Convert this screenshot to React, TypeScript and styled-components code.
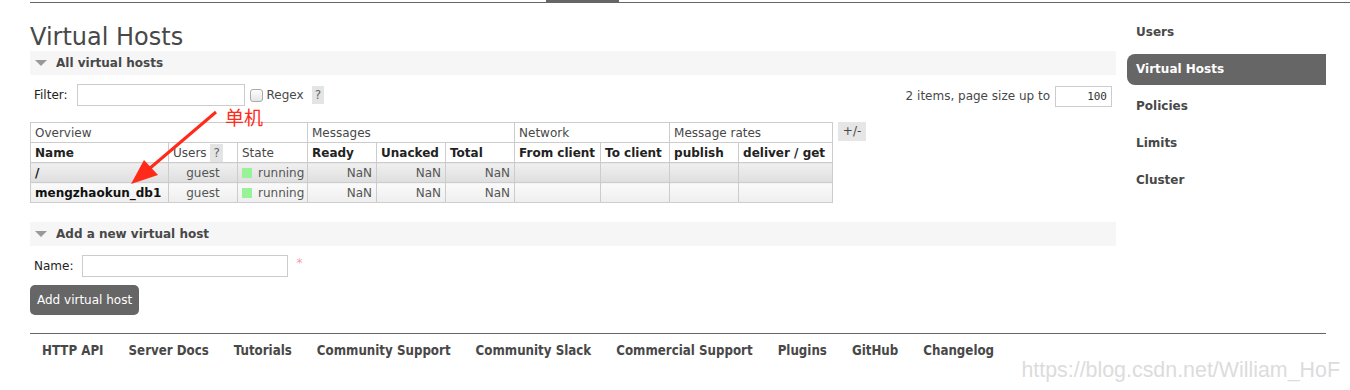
import * as React from 'react';
import styled, { createGlobalStyle } from 'styled-components';

const GlobalStyle = createGlobalStyle`
  html, body {
    margin: 0;
    padding: 0;
    background: #ffffff;
  }
  body {
    font-family: 'DejaVu Sans', Verdana, sans-serif;
    font-size: 12px;
    color: #484848;
  }
`;

type Host = { name: string; users: string; state: string };

const hosts: Host[] = [
  { name: '/', users: 'guest', state: 'running' },
  { name: 'mengzhaokun_db1', users: 'guest', state: 'running' },
];

const colWidths = [138, 69, 70, 69, 69, 69, 86, 69, 69, 94];

const navItems = ['Users', 'Virtual Hosts', 'Policies', 'Limits', 'Cluster'];
const footerLinks = [
  'HTTP API',
  'Server Docs',
  'Tutorials',
  'Community Support',
  'Community Slack',
  'Commercial Support',
  'Plugins',
  'GitHub',
  'Changelog',
];

const App = () => {
  return (
    <Page>
      <GlobalStyle />
      <TopBar>
        <TopTab />
      </TopBar>
      <Layout>
        <Main>
          <Title>Virtual Hosts</Title>
          <SectionHeader>
            <Triangle />
            <span>All virtual hosts</span>
          </SectionHeader>
          <FilterRow>
            <FilterLeft>
              <label>Filter:</label>
              <TextInput $width={168} />
              <CheckBox />
              <span>Regex</span>
              <Help>?</Help>
            </FilterLeft>
            <FilterRight>
              <span>2 items, page size up to</span>
              <PageSize>100</PageSize>
            </FilterRight>
          </FilterRow>

          <TableWrap>
            <ListTable>
              <colgroup>
                {colWidths.map((w, i) => (
                  <Col key={i} $w={w} />
                ))}
              </colgroup>
              <thead>
                <tr>
                  <GroupTh colSpan={3}>Overview</GroupTh>
                  <GroupTh colSpan={3}>Messages</GroupTh>
                  <GroupTh colSpan={2}>Network</GroupTh>
                  <GroupTh colSpan={2}>Message rates</GroupTh>
                </tr>
                <tr>
                  <Th>Name</Th>
                  <Th $plain>
                    Users <Help>?</Help>
                  </Th>
                  <Th $plain>State</Th>
                  <Th>Ready</Th>
                  <Th>Unacked</Th>
                  <Th>Total</Th>
                  <Th>From client</Th>
                  <Th>To client</Th>
                  <Th>publish</Th>
                  <Th>deliver / get</Th>
                </tr>
              </thead>
              <tbody>
                {hosts.map((h, i) => (
                  <Row key={h.name} $alt={i % 2 === 0}>
                    <NameTd>{h.name}</NameTd>
                    <Td $align="center">{h.users}</Td>
                    <Td>
                      <StateBox />
                      {h.state}
                    </Td>
                    <Td $align="right">NaN</Td>
                    <Td $align="right">NaN</Td>
                    <Td $align="right">NaN</Td>
                    <Td />
                    <Td />
                    <Td />
                    <Td />
                  </Row>
                ))}
              </tbody>
            </ListTable>
            <Toggle>+/-</Toggle>
          </TableWrap>

          <SectionHeader>
            <Triangle />
            <span>Add a new virtual host</span>
          </SectionHeader>
          <NameRow>
            <label>Name:</label>
            <TextInput $width={206} />
            <Required>*</Required>
          </NameRow>
          <AddButton>Add virtual host</AddButton>
        </Main>
        <Nav>
          {navItems.map((item) => (
            <NavItem key={item} $active={item === 'Virtual Hosts'}>
              {item}
            </NavItem>
          ))}
        </Nav>
      </Layout>
      <Footer>
        {footerLinks.map((l) => (
          <FooterLink key={l}>{l}</FooterLink>
        ))}
      </Footer>

      <Arrow width="110" height="90" viewBox="0 0 110 90">
        <line x1="92" y1="4" x2="25" y2="61" stroke="#ff2a1a" strokeWidth="3" />
        <polygon points="7,76 20,52 34,67" fill="#ff2a1a" />
      </Arrow>
      <Note>单机</Note>
      <Watermark>https://blog.csdn.net/William_HoF</Watermark>
    </Page>
  );
};

const Page = styled.div`
  position: relative;
  width: 1350px;
  height: 390px;
  overflow: hidden;
`;

const TopBar = styled.div`
  margin-left: 30px;
  width: 1296px;
  height: 2px;
  border-bottom: 1px solid #666;
  padding-left: 516px;
  box-sizing: content-box;
`;

const TopTab = styled.div`
  width: 73px;
  height: 3px;
  background: #666;
`;

const Layout = styled.div`
  display: flex;
  padding-left: 30px;
`;

const Main = styled.div`
  width: 1086px;
`;

const Title = styled.h1`
  margin: 20px 0 0;
  font-size: 24px;
  font-weight: normal;
  line-height: 28px;
  color: #484848;
`;

const SectionHeader = styled.div`
  display: flex;
  align-items: center;
  height: 24px;
  background: #f6f6f6;
  padding-left: 5px;
  font-weight: bold;
  font-size: 12px;
  color: #484848;
  & > span {
    margin-left: 9px;
  }
`;

const Triangle = styled.div`
  width: 0;
  height: 0;
  border-left: 6px solid transparent;
  border-right: 6px solid transparent;
  border-top: 6px solid #999;
`;

const FilterRow = styled.div`
  display: flex;
  justify-content: space-between;
  align-items: center;
  margin-top: 9px;
  height: 22px;
  padding-left: 4px;
`;

const FilterLeft = styled.div`
  display: flex;
  align-items: center;
  color: #484848;
  & > label {
    margin-right: 9px;
    color: #222;
  }
  & > span {
    margin: 0 4px 0 4px;
  }
`;

const FilterRight = styled.div`
  display: flex;
  align-items: center;
  margin-top: 2px;
  margin-right: 4px;
  & > span {
    margin-right: 5px;
  }
`;

const TextInput = styled.div<{ $width: number }>`
  width: ${(p) => p.$width}px;
  height: 22px;
  box-sizing: border-box;
  border: 1px solid #ccc;
  background: #fff;
`;

const CheckBox = styled.div`
  width: 11px;
  height: 11px;
  margin-left: 5px;
  border: 1px solid #aaa;
  border-radius: 3px;
  background: linear-gradient(#fdfdfd, #e6e6e6);
`;

const Help = styled.span`
  display: inline-block;
  padding: 0 3px;
  line-height: 18px;
  background: #e4e4e4;
  color: #666;
  font-weight: normal;
`;

const PageSize = styled.div`
  width: 57px;
  height: 21px;
  box-sizing: border-box;
  border: 1px solid #ccc;
  text-align: right;
  padding-right: 4px;
  line-height: 19px;
  font-family: 'DejaVu Sans Mono', monospace;
  font-size: 11px;
  color: #333;
`;

const TableWrap = styled.div`
  display: flex;
  align-items: flex-start;
  margin-top: 16px;
  margin-bottom: 19px;
`;

const ListTable = styled.table`
  width: 803px;
  border-collapse: collapse;
  table-layout: fixed;
  border: 1px solid #ccc;
`;

const Col = styled.col<{ $w: number }>`
  width: ${(p) => p.$w}px;
`;

const GroupTh = styled.th`
  border: 1px solid #ccc;
  height: 19px;
  padding: 0 4px;
  text-align: left;
  font-weight: normal;
  color: #484848;
`;

const Th = styled.th<{ $plain?: boolean }>`
  height: 19px;
  padding: 0 4px;
  border: 1px solid #ccc;
  text-align: left;
  white-space: nowrap;
  font-weight: ${(p) => (p.$plain ? 'normal' : 'bold')};
  color: ${(p) => (p.$plain ? '#484848' : '#222')};
`;

const Row = styled.tr<{ $alt: boolean }>`
  & > td {
    background: ${(p) =>
      p.$alt ? 'linear-gradient(#f0f0f0, #dedede)' : 'linear-gradient(#fafafa, #eeeeee)'};
  }
`;

const Td = styled.td<{ $align?: string }>`
  height: 19px;
  padding: 0 4px;
  border: 1px solid #ccc;
  text-align: ${(p) => p.$align || 'left'};
  white-space: nowrap;
  color: #555;
`;

const NameTd = styled(Td)`
  font-weight: bold;
  color: #111;
`;

const StateBox = styled.span`
  display: inline-block;
  width: 10px;
  height: 10px;
  background: #98f298;
  margin-right: 6px;
  vertical-align: -1px;
`;

const Toggle = styled.div`
  margin-left: 5px;
  width: 28px;
  height: 19px;
  line-height: 19px;
  text-align: center;
  background: #e6e6e6;
  color: #484848;
`;

const NameRow = styled.div`
  display: flex;
  align-items: center;
  margin-top: 9px;
  padding-left: 4px;
  & > label {
    margin-right: 9px;
    color: #222;
  }
`;

const Required = styled.span`
  color: #f5a0a8;
  margin-left: 8px;
  align-self: flex-start;
  margin-top: 1px;
`;

const AddButton = styled.div`
  display: inline-block;
  margin-top: 8px;
  padding: 0 7px;
  height: 30px;
  line-height: 30px;
  background: #666;
  color: #fff;
  border-radius: 5px;
  font-size: 12px;
`;

const Nav = styled.div`
  display: flex;
  flex-direction: column;
  margin-left: 11px;
  margin-top: 14px;
  width: 199px;
`;

const NavItem = styled.div<{ $active: boolean }>`
  height: 31px;
  line-height: 31px;
  margin-bottom: 6px;
  padding-left: 9px;
  font-weight: bold;
  font-size: 12px;
  color: ${(p) => (p.$active ? '#fff' : '#484848')};
  background: ${(p) => (p.$active ? '#666' : 'transparent')};
  border-radius: 8px 0 0 8px;
`;

const Footer = styled.div`
  display: flex;
  margin: 18px 24px 0 30px;
  border-top: 1px solid #666;
  padding: 9px 0 0 12px;
  gap: 25px;
`;

const FooterLink = styled.span`
  font-family: 'DejaVu Sans Condensed', 'DejaVu Sans', sans-serif;
  font-weight: bold;
  font-size: 13.2px;
  color: #484848;
`;

const Arrow = styled.svg`
  position: absolute;
  left: 124px;
  top: 108px;
`;

const Note = styled.div`
  position: absolute;
  left: 225px;
  top: 105px;
  font-family: 'Noto Sans CJK SC', sans-serif;
  font-size: 19px;
  line-height: 24px;
  color: #ff2a1a;
`;

const Watermark = styled.div`
  position: absolute;
  right: 10px;
  top: 358px;
  font-family: 'Liberation Sans', Arial, sans-serif;
  font-size: 21.4px;
  color: #dcdcdc;
`;

export default App;
